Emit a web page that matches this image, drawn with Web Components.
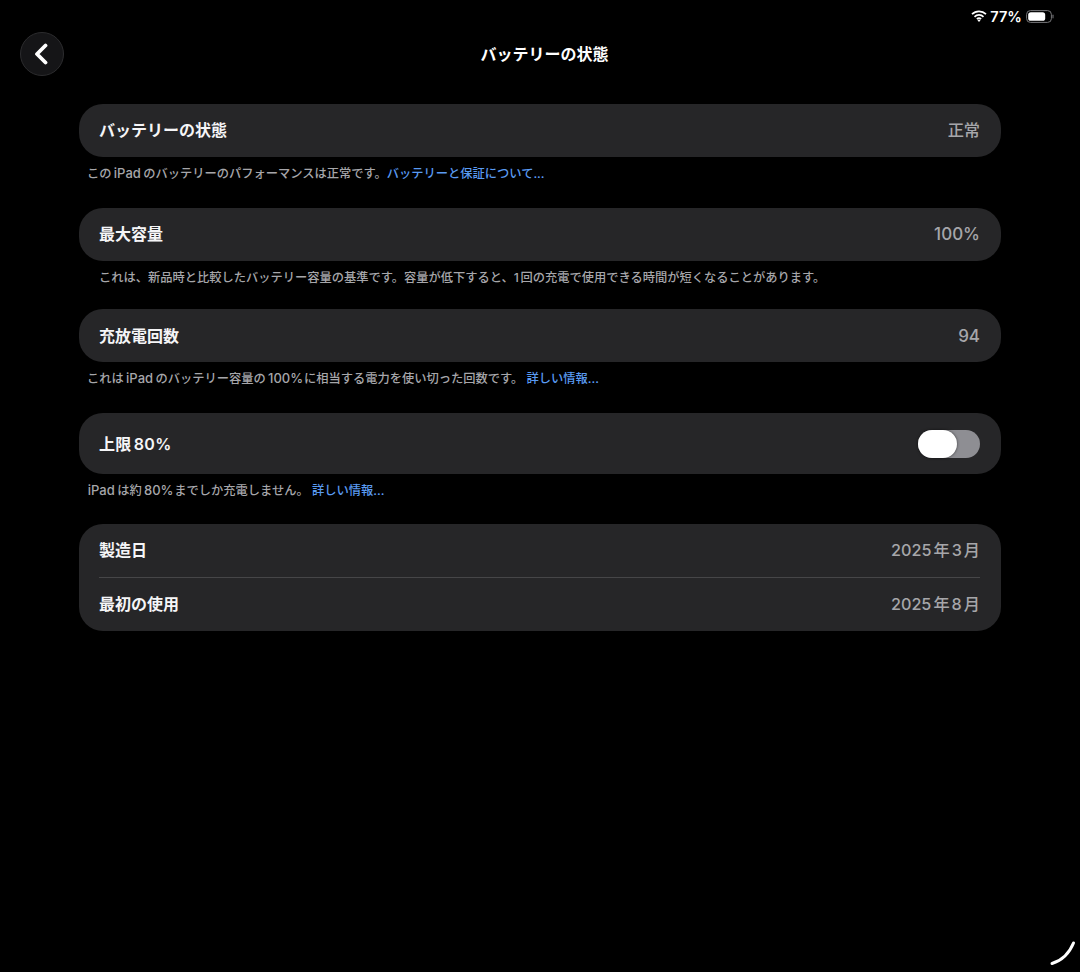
<!DOCTYPE html>
<html lang="ja"><head><meta charset="utf-8"><title>バッテリーの状態</title>
<style>
html,body{margin:0;background:#000;height:972px;overflow:hidden}
body{font-family:Inter,"Noto Sans CJK JP",sans-serif;color:#fff;text-autospace:normal}
</style></head><body>
<battery-page>
  <status-bar slot="status"></status-bar>
  <nav-header slot="header">バッテリーの状態</nav-header>
  <setting-card style="margin-top:28px">
    <setting-row label="バッテリーの状態" value="正常"></setting-row>
  </setting-card>
  <setting-note>この<span>iPad</span>のバッテリーのパフォーマンスは正常です。<a>バッテリーと保証について...</a></setting-note>
  <setting-card style="margin-top:21px">
    <setting-row label="最大容量" value="100%" style="--vs:17px;--vp:1px"></setting-row>
  </setting-card>
  <setting-note inset>これは、新品時と比較したバッテリー容量の基準です。容量が低下すると、1回の充電で使用できる時間が短くなることがあります。</setting-note>
  <setting-card style="margin-top:18px">
    <setting-row label="充放電回数" value="94" style="--vs:17px;--vp:0px;--lp:2px"></setting-row>
  </setting-card>
  <setting-note>これは<span>iPad</span>のバッテリー容量の<span>100%</span>に相当する電力を使い切った回数です。 <a>詳しい情報...</a></setting-note>
  <setting-card style="margin-top:21px">
    <setting-row label="上限80%" tall style="--ls:.35px;--lp:2px"><toggle-switch></toggle-switch></setting-row>
  </setting-card>
  <setting-note><span>iPad</span>は約<span>80%</span>までしか充電しません。 <a>詳しい情報...</a></setting-note>
  <setting-card style="margin-top:20px">
    <setting-row label="製造日" value="2025年3月" divided></setting-row>
    <setting-row label="最初の使用" value="2025年8月"></setting-row>
  </setting-card>
  <corner-mark></corner-mark>
</battery-page>
<script>
function def(name, css, html){
  customElements.define(name, class extends HTMLElement{
    connectedCallback(){
      if(this.shadowRoot) return;
      const r=this.attachShadow({mode:'open'});
      r.innerHTML='<style>'+css+'</style>'+html;
    }
  });
}
def('battery-page',`:host{display:block;position:relative;width:1080px;height:972px;background:#000}
  .list{display:flex;flex-direction:column;padding:0 79px}`,
  `<slot name="status"></slot><slot name="header"></slot><div class="list"><slot></slot></div>`);
def('status-bar',`:host{display:flex;justify-content:flex-end;align-items:center;height:32px;gap:3px;padding-right:26px;box-sizing:border-box;font:600 14.5px Inter,sans-serif;color:#fff}
  span{letter-spacing:.1px;margin-right:1px}svg{display:block}`,
  `<svg width="16" height="12" viewBox="0 0 16 12"><path d="M1 4.2a10 10 0 0 1 14 0M3.5 6.8a6.4 6.4 0 0 1 9 0M5.9 9.1a3 3 0 0 1 4.2 0" fill="none" stroke="#fff" stroke-width="1.7"/><path d="M8 12l-1.5-1.7a2.1 2.1 0 0 1 3 0z" fill="#fff"/></svg>
  <span>77%</span>
  <svg width="28" height="13" viewBox="0 0 28 13"><rect x=".6" y=".6" width="24.8" height="11.8" rx="3.8" fill="none" stroke="#77777a" stroke-width="1"/><rect x="2.2" y="2.2" width="17" height="8.6" rx="2.6" fill="#fff"/><rect x="26.4" y="4.6" width="1.2" height="3.8" rx=".6" fill="#66666a"/></svg>`);
def('nav-header',`:host{display:block;position:relative;height:44px;font-weight:700;font-size:16px;line-height:44px;text-align:center;padding-left:9px;color:#fff}
  button{position:absolute;left:20px;top:0;width:44px;height:44px;border-radius:50%;background:#151517;border:1px solid #2c2c2e;padding:0;display:flex;align-items:center;justify-content:center;box-sizing:border-box}
  svg{display:block;margin-left:-3px}`,
  `<button aria-label="戻る"><svg width="14" height="22" viewBox="0 0 14 22"><path d="M11.5 2.5L3 11l8.5 8.5" fill="none" stroke="#fff" stroke-width="3.8" stroke-linecap="round" stroke-linejoin="round"/></svg></button><slot></slot>`);
def('setting-card',`:host{display:block;background:#262628;border-radius:24px;overflow:hidden}`,`<slot></slot>`);
customElements.define('setting-row',class extends HTMLElement{
  connectedCallback(){
    if(this.shadowRoot) return;
    const r=this.attachShadow({mode:'open'});
    const tall=this.hasAttribute('tall'),div=this.hasAttribute('divided');
    r.innerHTML=`<style>
    :host{display:block;padding:0 21px 0 20px}
    .r{display:flex;justify-content:space-between;align-items:center;height:${tall?61:div?54:53}px;box-sizing:border-box;font-size:16px;text-autospace:normal;${div?'border-bottom:1px solid #464648;':''}}
    .l{font-weight:600;color:#f5f5f7;padding-bottom:var(--lp,4px);letter-spacing:var(--ls,0)}.v{color:#a6a6aa;font-weight:500;font-size:var(--vs,16.2px);padding-bottom:var(--vp,3px)}
    </style><div class="r"><span class="l">${this.getAttribute('label')}</span>${this.hasAttribute('value')?`<span class="v">${this.getAttribute('value')}</span>`:'<slot></slot>'}</div>`;
  }
});
def('setting-note',`:host{display:block;height:27px;padding-top:3px;line-height:27px;padding-left:8px;font-size:12.25px;font-weight:500;color:#a6a6aa;white-space:nowrap;text-autospace:normal}
  :host([inset]){padding-left:20px}
  ::slotted(a){color:#5a9bf2;font-weight:500}
  ::slotted(span){font-size:13px;margin:0 .8px}`,`<slot></slot>`);
def('toggle-switch',`:host{display:block;position:relative;width:62px;height:28px;border-radius:14px;background:#8e8e93}
  i{position:absolute;left:0;top:0;width:39px;height:28px;border-radius:14px;background:#fff;box-shadow:0 0 3px rgba(0,0,0,.6)}`,`<i></i>`);
def('corner-mark',`:host{position:absolute;right:4px;bottom:6px;display:block;width:26px;height:26px}svg{display:block}`,
  `<svg width="26" height="26" viewBox="0 0 26 26"><path d="M2 23.5C12 20.5 19 14 23.5 3" fill="none" stroke="#fff" stroke-width="3" stroke-linecap="round"/></svg>`);
</script>
</body></html>
